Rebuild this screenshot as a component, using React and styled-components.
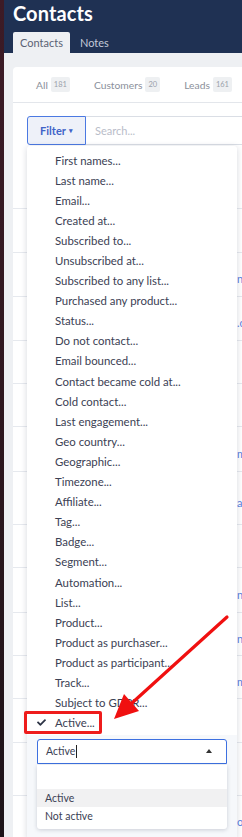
import styled, { createGlobalStyle } from "styled-components";
import { FaCheck } from "react-icons/fa";

const GlobalStyle = createGlobalStyle`
  body {
    margin: 0;
    font-family: Lato, "Open Sans", sans-serif;
    background: #eef0f3;
  }
`;

const filters = [
  "First names...",
  "Last name...",
  "Email...",
  "Created at...",
  "Subscribed to...",
  "Unsubscribed at...",
  "Subscribed to any list...",
  "Purchased any product...",
  "Status...",
  "Do not contact...",
  "Email bounced...",
  "Contact became cold at...",
  "Cold contact...",
  "Last engagement...",
  "Geo country...",
  "Geographic...",
  "Timezone...",
  "Affiliate...",
  "Tag...",
  "Badge...",
  "Segment...",
  "Automation...",
  "List...",
  "Product...",
  "Product as purchaser...",
  "Product as participant...",
  "Track...",
  "Subject to GDPR...",
];

// rows of the contacts table hidden behind the menu
const rows = [
  { h: 44, t: "" },
  { h: 44, t: "" },
  { h: 44, t: "n" },
  { h: 44, t: ".c" },
  { h: 43, t: "" },
  { h: 43, t: "" },
  { h: 45, t: "m" },
  { h: 53, t: "a" },
  { h: 43, t: "" },
  { h: 45, t: "n" },
  { h: 43, t: "n" },
  { h: 43, t: "m" },
  { h: 44, t: "" },
  { h: 53, t: "" },
  { h: 44, t: "o" },
];

function App() {
  return (
    <Page>
      <GlobalStyle />
      <Strip />
      <Main>
        <Header>
          <Title>Contacts</Title>
          <HeaderTabs>
            <HeaderTab active>Contacts</HeaderTab>
            <HeaderTab>Notes</HeaderTab>
          </HeaderTabs>
        </Header>
        <Content>
          <Card>
            <Segments>
              <Segment>
                All <Count>181</Count>
              </Segment>
              <Segment>
                Customers <Count>20</Count>
              </Segment>
              <Segment>
                Leads <Count>161</Count>
              </Segment>
            </Segments>
            <Toolbar>
              <FilterBtn>
                Filter <Caret>▾</Caret>
              </FilterBtn>
              <Search placeholder="Search..." />
            </Toolbar>
            <Table>
              {rows.map((r, i) => (
                <Row key={i} style={{ height: r.h }}>
                  <Cell>{r.t}</Cell>
                </Row>
              ))}
            </Table>

            <Menu>
              {filters.map((f) => (
                <MenuItem key={f}>{f}</MenuItem>
              ))}
              <MenuItem checked>
                <Check>
                  <FaCheck />
                </Check>
                Active...
                <RedBox />
              </MenuItem>
              <ValuePanel>
                <Select>
                  <SelectText>Active</SelectText>
                  <Cursor />
                  <UpCaret />
                </Select>
                <Options>
                  <Option />
                  <Option selected>Active</Option>
                  <Option>Not active</Option>
                </Options>
              </ValuePanel>
            </Menu>
          </Card>
        </Content>
      </Main>
      <Arrow width="242" height="837" viewBox="0 0 242 837">
        <line
          x1="227"
          y1="617"
          x2="132"
          y2="703"
          stroke="#f01010"
          strokeWidth="3.2"
          strokeLinecap="round"
        />
        <polygon points="114,719 139,711 124,694" fill="#f01010" />
      </Arrow>
    </Page>
  );
}

const Page = styled.div`
  position: relative;
  display: flex;
  width: 242px;
  height: 837px;
  overflow: hidden;
`;

const Strip = styled.div`
  width: 4px;
  flex-shrink: 0;
  background: linear-gradient(#3d1b26, #2a161d 60%, #1c1318);
`;

const Main = styled.div`
  flex: 1;
  display: flex;
  flex-direction: column;
  min-width: 0;
  background: #eef0f3;
`;

const Header = styled.div`
  background: #1f3153;
  padding-left: 9px;
`;

const Title = styled.div`
  height: 32px;
  color: #fff;
  font-size: 20px;
  font-weight: 700;
  line-height: 26px;
  letter-spacing: 0.1px;
`;

const HeaderTabs = styled.div`
  display: flex;
  height: 21px;
`;

const HeaderTab = styled.div`
  padding: 0 7px;
  margin-right: ${(p) => (p.active ? "3px" : "0")};
  font-size: 11px;
  line-height: 21px;
  border-radius: 2px 2px 0 0;
  color: ${(p) => (p.active ? "#5a6273" : "#c3cad8")};
  background: ${(p) => (p.active ? "#eef0f3" : "transparent")};
`;

const Content = styled.div`
  flex: 1;
  padding: 14px 0 0 9px;
  min-width: 0;
`;

const Card = styled.div`
  position: relative;
  width: 260px;
  height: 100%;
  background: #fff;
  border-radius: 4px 0 0 0;
`;

const Segments = styled.div`
  display: flex;
  height: 35px;
  align-items: center;
  padding-left: 23px;
  gap: 24px;
  border-bottom: 1px solid #e3e6eb;
`;

const Segment = styled.div`
  display: flex;
  align-items: center;
  gap: 3px;
  font-size: 10.3px;
  color: #8b909b;
  white-space: nowrap;
`;

const Count = styled.span`
  font-size: 7.5px;
  padding: 3px 3px;
  border-radius: 2px;
  background: #eef0f2;
  color: #9aa0aa;
`;

const Toolbar = styled.div`
  display: flex;
  padding: 13px 0 0 14px;
  height: 29px;
`;

const FilterBtn = styled.div`
  display: flex;
  align-items: center;
  justify-content: center;
  gap: 3px;
  width: 57px;
  height: 27px;
  border: 1px solid #4b79e2;
  border-radius: 3px 0 0 3px;
  background: #eef1f9;
  color: #3f63c8;
  font-size: 11px;
  font-weight: 700;
`;

const Caret = styled.span`
  font-size: 7px;
`;

const Search = styled.input`
  flex: 1;
  height: 29px;
  box-sizing: border-box;
  border: 1px solid #dadee5;
  border-left: none;
  padding: 0 9px;
  font-family: inherit;
  font-size: 11px;
  outline: none;
  &::placeholder {
    color: #b9bdc9;
  }
`;

const Table = styled.div`
  margin-top: 20px;
`;

const Row = styled.div`
  display: flex;
  align-items: center;
  box-sizing: border-box;
  border-bottom: 1px solid #e6e9ee;
  padding-top: 8px;
`;

const Cell = styled.div`
  padding-left: 224px;
  font-size: 11px;
  color: #5b7fe0;
  white-space: nowrap;
`;

const Menu = styled.div`
  position: absolute;
  left: 14px;
  top: 79px;
  width: 210px;
  bottom: 0;
  padding-top: 4px;
  background: #fff;
  border-radius: 3px 3px 0 0;
  box-shadow: 0 1px 6px rgba(30, 40, 70, 0.18);
`;

const MenuItem = styled.div`
  position: relative;
  display: flex;
  align-items: center;
  height: 20.1px;
  padding-left: ${(p) => (p.checked ? "10px" : "28px")};
  font-size: 11.4px;
  color: #3b4154;
  white-space: nowrap;
`;

const Check = styled.span`
  display: flex;
  width: 18px;
  font-size: 9px;
  color: #2c3345;
`;

const RedBox = styled.span`
  position: absolute;
  left: -3px;
  top: -2px;
  width: 72px;
  height: 17px;
  border: 3px solid #ee1c1c;
  border-radius: 2px;
`;

const ValuePanel = styled.div`
  margin-top: 2px;
  padding: 4px 10px 0;
  height: 120px;
  background: #f6f8fb;
`;

const Select = styled.div`
  display: flex;
  align-items: center;
  height: 23px;
  padding: 0 8px;
  border: 1px solid #3d70e0;
  border-radius: 3px 3px 0 0;
  background: #fff;
`;

const SelectText = styled.span`
  font-size: 10.5px;
  color: #3b4154;
`;

const Cursor = styled.span`
  width: 1px;
  height: 13px;
  margin-left: 1px;
  background: #222;
`;

const UpCaret = styled.span`
  margin-left: auto;
  margin-right: 6px;
  width: 0;
  height: 0;
  border-left: 3.5px solid transparent;
  border-right: 3.5px solid transparent;
  border-bottom: 4px solid #333;
`;

const Options = styled.div`
  margin-top: 1px;
  padding-bottom: 4px;
  background: #fff;
  border-radius: 0 0 3px 3px;
  box-shadow: 0 1px 4px rgba(30, 40, 70, 0.2);
`;

const Option = styled.div`
  height: ${(p) => (p.children ? "18px" : "24px")};
  line-height: 18px;
  padding-left: 8px;
  font-size: 10.5px;
  color: #3b4154;
  background: ${(p) => (p.selected ? "#f1f1f2" : "#fff")};
`;

const Arrow = styled.svg`
  position: absolute;
  left: 0;
  top: 0;
  pointer-events: none;
`;

export default App;
